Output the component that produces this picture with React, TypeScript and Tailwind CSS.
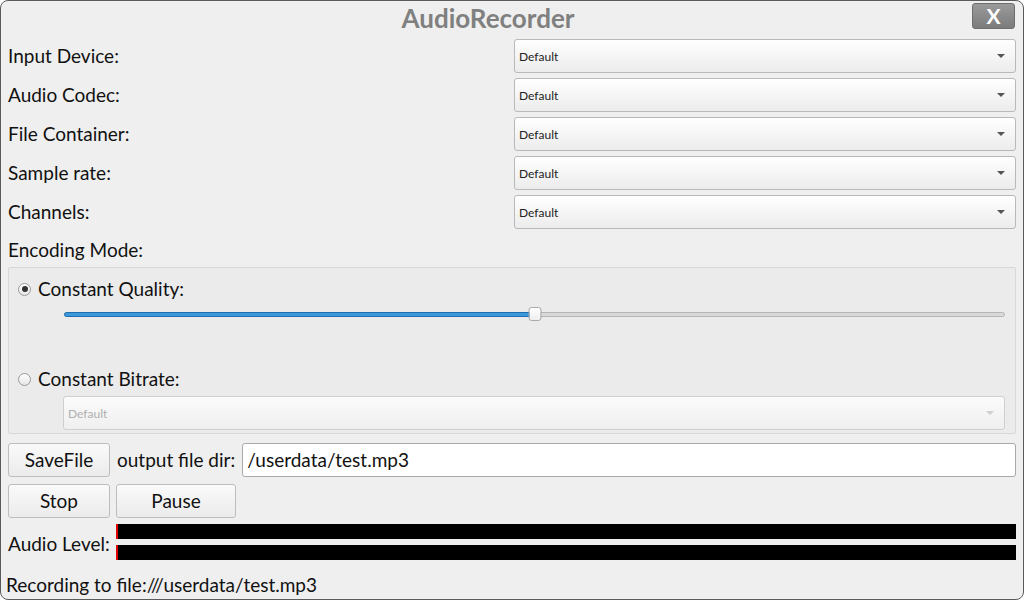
import { useState } from "react";

const font = { fontFamily: "Lato, 'Noto Sans', sans-serif" };

function Combo({ disabled = false }: { disabled?: boolean }) {
  return (
    <div
      className={`flex h-[34px] items-center justify-between rounded-[3px] border px-[4px] text-[12px] leading-none ${
        disabled
          ? "border-[#cfcfcf] bg-gradient-to-b from-[#fbfbfb] to-[#efefef] text-[#b0b0b0]"
          : "border-[#b9b9b9] bg-gradient-to-b from-[#ffffff] to-[#ececec] text-[#222]"
      }`}
    >
      <span className="pt-[2px]">Default</span>
      <svg width="8" height="4" viewBox="0 0 8 4" className="mr-[6px]">
        <path d="M0 0h8L4 4z" fill={disabled ? "#d0d0d0" : "#555"} />
      </svg>
    </div>
  );
}

function Radio({ checked }: { checked: boolean }) {
  return (
    <span className="flex h-[13px] w-[13px] items-center justify-center rounded-full border border-[#9a9a9a] bg-gradient-to-b from-white to-[#e6e6e6]">
      {checked && <span className="h-[6px] w-[6px] rounded-full bg-[#333]" />}
    </span>
  );
}

function Btn({ label, w }: { label: string; w: string }) {
  return (
    <button
      className={`${w} h-[34px] rounded-[3px] border border-[#bdbdbd] bg-gradient-to-b from-[#fafafa] to-[#ebebeb] text-[19px] text-[#111]`}
    >
      {label}
    </button>
  );
}

const rows = ["Input Device:", "Audio Codec:", "File Container:", "Sample rate:", "Channels:"];

export default function App() {
  const [quality] = useState(50);
  return (
    <div
      style={font}
      className="flex h-[600px] w-[1024px] flex-col rounded-[8px] border border-[#5a5a5a] bg-[#efefef] text-[19px] leading-[24px] text-[#111]"
    >
      <div className="relative flex h-[37px] items-start justify-center">
        <span className="ml-[-48px] text-[26px] font-bold leading-[34px] text-[#808080]">AudioRecorder</span>
        <button className="absolute right-[8px] top-[2px] flex h-[26px] w-[43px] items-center justify-center rounded-[3px] border border-[#6e6e6e] bg-gradient-to-b from-[#9a9a9a] to-[#7c7c7c] text-[21px] font-bold text-white">
          X
        </button>
      </div>
      <div className="flex flex-col gap-[5px] px-[7px] pt-[1px]">
        {rows.map((r) => (
          <div key={r} className="flex items-center">
            <span className="w-[506px]">{r}</span>
            <div className="flex-1">
              <Combo />
            </div>
          </div>
        ))}
      </div>
      <div className="px-[7px] pt-[9px]">Encoding Mode:</div>
      <div className="mx-[7px] mt-[5px] flex h-[167px] flex-col rounded-[2px] border border-[#d8d8d8] bg-[#ebebeb] px-[9px]">
        <div className="mt-[9px] flex items-center gap-[7px]">
          <Radio checked />
          <span>Constant Quality:</span>
        </div>
        <div className="relative ml-[46px] mr-[1px] mt-[6px] h-[14px]">
          <div className="absolute left-0 right-0 top-[5px] h-[5px] rounded-full border border-[#b5b5b5] bg-[#d9d9d9]" />
          <div
            className="absolute left-0 top-[5px] h-[5px] rounded-full border border-[#1f6fb0] bg-[#3a98db]"
            style={{ width: `${quality}%` }}
          />
          <div
            className="absolute top-0 h-[14px] w-[13px] -translate-x-1/2 rounded-[3px] border border-[#a8a8a8] bg-gradient-to-b from-white to-[#eeeeee]"
            style={{ left: `${quality}%` }}
          />
        </div>
        <div className="mt-[46px] flex items-center gap-[7px]">
          <Radio checked={false} />
          <span>Constant Bitrate:</span>
        </div>
        <div className="ml-[45px] mr-[1px] mt-[5px]">
          <Combo disabled />
        </div>
      </div>
      <div className="mt-[9px] flex items-center gap-[7px] px-[7px]">
        <Btn label="SaveFile" w="w-[102px]" />
        <span>output file dir:</span>
        <div className="flex h-[34px] flex-1 items-center rounded-[3px] border border-[#a9a9a9] bg-white px-[4px]">
          /userdata/test.mp3
        </div>
      </div>
      <div className="mt-[7px] flex gap-[6px] px-[7px]">
        <Btn label="Stop" w="w-[102px]" />
        <Btn label="Pause" w="w-[120px]" />
      </div>
      <div className="mt-[6px] flex items-center px-[7px]">
        <span className="w-[108px] pt-[3px]">Audio Level:</span>
        <div className="flex flex-1 flex-col gap-[6px]">
          <div className="h-[15px] border-l-2 border-[#e00000] bg-black" />
          <div className="h-[15px] border-l-2 border-[#e00000] bg-black" />
        </div>
      </div>
      <div className="mt-[13px] px-[5px]">Recording to file:///userdata/test.mp3</div>
    </div>
  );
}
